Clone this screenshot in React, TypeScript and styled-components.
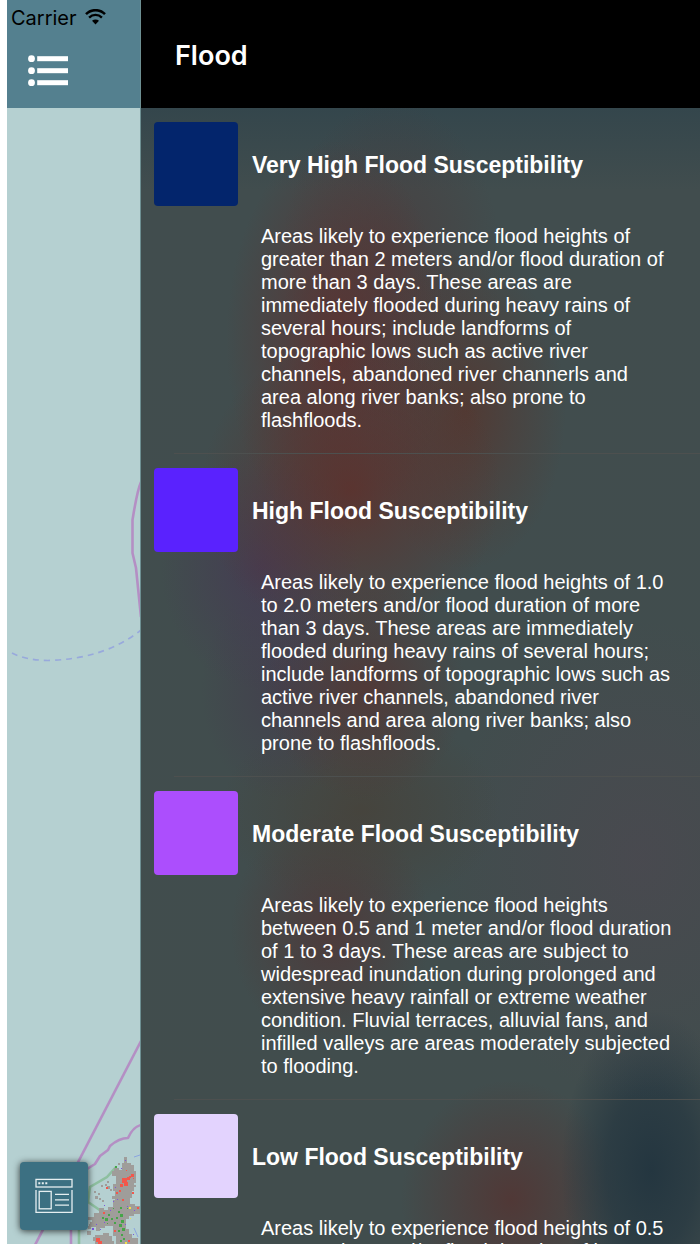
import React from 'react';
import styled, { createGlobalStyle } from 'styled-components';

const Global = createGlobalStyle`
  *, *::before, *::after { box-sizing: border-box; }
  body { margin: 0; background: #fff; }
  h1, h2, p, ul { margin: 0; padding: 0; }
`;

const Screen = styled.div`
  display: flex;
  height: 100vh;
  padding-left: 7px;
  overflow: hidden;
  font-family: "Liberation Sans", Arial, sans-serif;
`;

const MapPane = styled.section`
  flex: none;
  width: 134px;
  display: flex;
  flex-direction: column;
  background: #b5d0d1;
  border-right: 1px solid #6d8f92;
`;

const MapHeader = styled.header`
  height: 108px;
  background: #54808f;
`;

const StatusBar = styled.div`
  display: flex;
  align-items: center;
  gap: 8px;
  height: 36px;
  padding-left: 4px;
  font: 20px/36px Inter, sans-serif;
  color: #000;

  svg {
    margin-bottom: 3px;
  }
`;

const MenuButton = styled.button`
  display: block;
  margin: 18px 0 0 20px;
  padding: 0;
  border: 0;
  background: none;
  line-height: 0;
`;

const MapArea = styled.div`
  position: relative;
  flex: 1;
  min-height: 0;
  overflow: hidden;
`;

const MapDrawing = styled.svg`
  display: block;
  width: 100%;
  height: 100%;
`;

const LegendButton = styled.button`
  position: absolute;
  left: 13px;
  bottom: 14px;
  display: grid;
  place-items: center;
  width: 68px;
  height: 68px;
  padding: 0;
  border: 0;
  border-radius: 4px;
  background: #3c7082;
  box-shadow: 0 1px 7px rgba(0, 0, 0, 0.75);
`;

const Panel = styled.main`
  flex: 1;
  min-width: 0;
  display: flex;
  flex-direction: column;
  color: #fff;
  background:
    radial-gradient(ellipse 150px 150px at 210px 490px, rgba(98, 44, 38, 0.7), rgba(98, 44, 38, 0.35) 50%, transparent),
    radial-gradient(ellipse 110px 200px at 195px 340px, rgba(98, 44, 42, 0.7), rgba(98, 44, 42, 0.35) 50%, transparent),
    radial-gradient(ellipse 100px 160px at 325px 410px, rgba(90, 48, 38, 0.65), rgba(90, 48, 38, 0.3) 50%, transparent),
    radial-gradient(ellipse 110px 160px at 250px 260px, rgba(80, 52, 52, 0.5), transparent),
    radial-gradient(ellipse 100px 120px at 120px 570px, rgba(70, 54, 84, 0.7), transparent),
    radial-gradient(ellipse 100px 110px at 225px 690px, rgba(84, 52, 50, 0.8), transparent),
    radial-gradient(ellipse 80px 110px at 140px 690px, rgba(68, 56, 78, 0.6), transparent),
    radial-gradient(ellipse 140px 100px at 220px 810px, rgba(72, 64, 54, 0.7), transparent),
    radial-gradient(ellipse 100px 120px at 190px 930px, rgba(80, 54, 54, 0.8), transparent),
    radial-gradient(ellipse 200px 240px at 500px 860px, rgba(76, 72, 80, 0.7), transparent),
    radial-gradient(ellipse 90px 160px at 510px 1170px, rgba(36, 54, 64, 1), rgba(36, 54, 64, 0.7) 50%, transparent),
    radial-gradient(ellipse 110px 120px at 370px 1200px, rgba(82, 54, 52, 0.9), transparent),
    linear-gradient(#34464c 108px, #414d4e 190px, #414d4d);
`;

const PanelHeader = styled.header`
  flex: none;
  display: flex;
  align-items: center;
  height: 108px;
  padding: 4px 0 0 34px;
  background: #000;
`;

const Title = styled.h1`
  font: 600 27px/34px Inter, sans-serif;
`;

const Levels = styled.ul`
  list-style: none;
  flex: 1;
  min-height: 0;
  overflow-y: auto;
  scrollbar-width: none;
`;

const Level = styled.li`
  padding: 14px 27px 21px 13px;
  border-bottom: 1px solid;
  border-image: linear-gradient(to right, transparent 34px, #4d504f 34px) 1;
`;

const LevelHead = styled.div`
  display: flex;
  align-items: center;
  gap: 14px;
`;

const Swatch = styled.span<{ $color: string }>`
  flex: none;
  width: 84px;
  height: 84px;
  border-radius: 4px;
  background: ${(p) => p.$color};
`;

const LevelName = styled.h2`
  padding-top: 2px;
  font-size: 23px;
  line-height: 28px;
  font-weight: bold;
`;

const Description = styled.p`
  margin: 19px 0 0 107px;
  font-size: 20px;
  line-height: 23px;
`;

const WifiIcon = () => (
  <svg width="21" height="16" viewBox="0 0 21 16" fill="none" stroke="#000">
    <path d="M1 5.2C6.2 -0.2 14.8 -0.2 20 5.2" strokeWidth="2.5" />
    <path d="M4.1 8.6C7.8 5 13.2 5 16.9 8.6" strokeWidth="2.4" />
    <path d="M10.5 15.6 7 11.8C9 10 12 10 14 11.8Z" fill="#000" stroke="none" />
  </svg>
);

const MenuIcon = () => (
  <svg width="42" height="34" viewBox="27 54 42 34" fill="#fff">
    {[59, 71, 83].map((y) => (
      <g key={y}>
        <circle cx="31.5" cy={y - 0.3} r="3.4" />
        <rect x="37.2" y={y - 2.8} width="30.8" height="5" />
      </g>
    ))}
  </svg>
);

const LegendIcon = () => (
  <svg width="38" height="36" viewBox="0 0 38 36" fill="none" stroke="#e6eff1" strokeWidth="1.3">
    <rect x="1" y="1.4" width="36" height="7.6" />
    <path d="M1 12V34.4H37V12" />
    <rect x="4.2" y="13.4" width="12" height="17.4" />
    <path d="M20 16.4H34M20 21.8H34M20 27.2H34" />
    <path d="M3.3 5.2H5.3M6.8 5.2H8.8M10.3 5.2H12.3" strokeWidth="2" />
  </svg>
);

const terrain = [
  'M124 1157h3v6h4v2h3v6h2v12h-2v8h-2v7h-2v6h5v2h6v8h-7v2h-5v3h-3v10h3v5h3v4h6v6h-22v-8h-3v-10h-8v2h-5v3h-4v-4h-7v-3h3v-4h-5v-3h7v-4h5v-5h5v2h4v-3h5v-7h2v-9h-2v-7h3v-8h-4v-5h2v-3h5v2h3v-7h2z',
  'M95 1235h8v-2h6v3h3v5h2v3h-19v-3h-2v-4h2z',
];

/* x, y, size of the mosaic squares in each land-cover class */
const patches: { color: string; cells: [number, number, number][] }[] = [
  {
    color: '#9f9d9a',
    cells: [
      [94, 1191, 2], [95, 1196, 3], [98, 1193, 2], [99, 1198, 2], [102, 1200, 2],
      [107, 1181, 2], [107, 1186, 3], [110, 1189, 2], [101, 1185, 2], [105, 1184, 2],
      [88, 1226, 3], [90, 1222, 3], [94, 1217, 3], [112, 1196, 3], [134, 1185, 2],
      [118, 1163, 2], [132, 1192, 2], [87, 1231, 4],
    ],
  },
  {
    color: '#f2574b',
    cells: [
      [122, 1178, 5], [124, 1182, 4], [127, 1177, 3], [120, 1184, 3], [131, 1174, 3],
      [129, 1176, 2], [119, 1190, 2], [116, 1192, 2], [106, 1187, 2], [96, 1238, 4],
      [98, 1241, 4], [132, 1192, 2], [137, 1207, 2], [114, 1230, 2], [103, 1212, 2],
      [122, 1199, 2], [128, 1240, 2], [126, 1170, 1], [133, 1178, 1],
    ],
  },
  {
    color: '#45a548',
    cells: [
      [118, 1211, 2], [120, 1214, 3], [116, 1217, 2], [121, 1220, 3], [119, 1224, 3],
      [122, 1228, 3], [118, 1230, 2], [121, 1234, 2], [123, 1238, 2], [108, 1214, 2],
      [105, 1218, 3], [111, 1218, 2], [102, 1217, 2], [114, 1222, 2], [107, 1223, 1],
      [120, 1207, 2], [127, 1208, 1], [113, 1208, 1], [115, 1166, 2], [120, 1240, 2],
    ],
  },
  {
    color: '#7c55e0',
    cells: [
      [115, 1187, 1], [113, 1201, 1], [104, 1205, 1], [117, 1199, 1], [127, 1206, 1],
      [134, 1210, 1], [92, 1228, 2], [96, 1224, 1], [100, 1229, 1], [110, 1210, 1],
      [125, 1160, 1], [121, 1168, 1], [125, 1224, 1], [104, 1222, 1], [133, 1234, 1],
    ],
  },
  { color: '#f1df4a', cells: [[129, 1207, 2], [130, 1218, 1], [125, 1242, 2]] },
];

const MapShapes = () => (
  <MapDrawing viewBox="7 108 133 1136" preserveAspectRatio="xMinYMin slice" fill="none" aria-hidden="true">
    <g stroke="#b48fc4" strokeWidth="2.6" strokeLinejoin="round">
      <path d="M141 482C137 491 135 505 132.500 520V553L136 568L141 617" />
      <path d="M141 1041L35 1245" />
      <path d="M141 1125C136 1126 132 1129 128 1138C123 1138 118 1139 110 1146L108 1150L100 1156L95 1164L87 1169L71 1200V1244" />
    </g>
    <path
      d="M12 653Q25 660 48 660.500Q105 659 141 630"
      stroke="#98a9dc"
      strokeWidth="1.7"
      strokeDasharray="6 5"
    />
    <path
      d="M116 1167L107 1177L90 1187L88 1202L104 1213M79 1225V1244"
      stroke="#8dbf9f"
      strokeWidth="2.6"
    />
    <path d="M134 1157L140 1155M114 1175L116 1168M138 1237L134 1228" stroke="#8ba5e0" strokeWidth="1" />
    {terrain.map((d) => (
      <path key={d} d={d} fill="#9f9d9a" />
    ))}
    {patches.map(({ color, cells }) => (
      <g key={color} fill={color}>
        {cells.map(([x, y, s]) => (
          <rect key={`${x}-${y}`} x={x} y={y} width={s} height={s} />
        ))}
      </g>
    ))}
  </MapDrawing>
);

const levels = [
  {
    name: 'Very High Flood Susceptibility',
    color: '#03256c',
    text: 'Areas likely to experience flood heights of greater than 2 meters and/or flood duration of more than 3 days. These areas are immediately flooded during heavy rains of several hours; include landforms of topographic lows such as active river channels, abandoned river channerls and area along river banks; also prone to flashfloods.',
  },
  {
    name: 'High Flood Susceptibility',
    color: '#5a22fe',
    text: 'Areas likely to experience flood heights of 1.0 to 2.0 meters and/or flood duration of more than 3 days. These areas are immediately flooded during heavy rains of several hours; include landforms of topographic lows such as active river channels, abandoned river channels and area along river banks; also prone to flashfloods.',
  },
  {
    name: 'Moderate Flood Susceptibility',
    color: '#ac4efd',
    text: 'Areas likely to experience flood heights between 0.5 and 1 meter and/or flood duration of 1 to 3 days. These areas are subject to widespread inundation during prolonged and extensive heavy rainfall or extreme weather condition. Fluvial terraces, alluvial fans, and infilled valleys are areas moderately subjected to flooding.',
  },
  {
    name: 'Low Flood Susceptibility',
    color: '#e3d3fe',
    text: 'Areas likely to experience flood heights of 0.5 meter or less and/or flood duration of less than\u00a01\u00a0day.',
  },
];

export default function App() {
  return (
    <Screen>
      <Global />
      <MapPane>
        <MapHeader>
          <StatusBar>
            Carrier
            <WifiIcon />
          </StatusBar>
          <MenuButton aria-label="Menu">
            <MenuIcon />
          </MenuButton>
        </MapHeader>
        <MapArea>
          <MapShapes />
          <LegendButton aria-label="Legend">
            <LegendIcon />
          </LegendButton>
        </MapArea>
      </MapPane>
      <Panel>
        <PanelHeader>
          <Title>Flood</Title>
        </PanelHeader>
        <Levels>
          {levels.map((level) => (
            <Level key={level.name}>
              <LevelHead>
                <Swatch $color={level.color} />
                <LevelName>{level.name}</LevelName>
              </LevelHead>
              <Description>{level.text}</Description>
            </Level>
          ))}
        </Levels>
      </Panel>
    </Screen>
  );
}
